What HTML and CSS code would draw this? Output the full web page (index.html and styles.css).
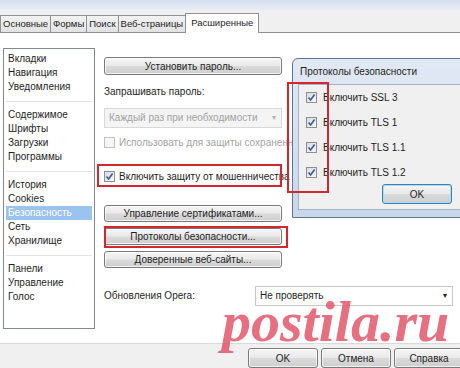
FILE: index.html
```html
<!DOCTYPE html>
<html lang="ru">

<head>
    <meta charset="UTF-8">
    <title>Настройки</title>
    <link rel="stylesheet" href="styles.css">
</head>

<body>
    <div class="glass"></div>

    <!-- Вкладки -->
    <div class="tabs">
        <div class="tab">Основные</div>
        <div class="tab">Формы</div>
        <div class="tab">Поиск</div>
        <div class="tab">Веб-страницы</div>
        <div class="tab active">Расширенные</div>
    </div>

    <div class="panel">
        <ul class="sections">
            <li>Вкладки</li>
            <li>Навигация</li>
            <li>Уведомления</li>
            <li class="sep"></li>
            <li>Содержимое</li>
            <li>Шрифты</li>
            <li>Загрузки</li>
            <li>Программы</li>
            <li class="sep"></li>
            <li>История</li>
            <li>Cookies</li>
            <li class="selected">Безопасность</li>
            <li>Сеть</li>
            <li>Хранилище</li>
            <li class="sep"></li>
            <li>Панели</li>
            <li>Управление</li>
            <li>Голос</li>
        </ul>

        <div class="settings">
            <button class="btn wide">Установить пароль...</button>
            <div class="label ask">Запрашивать пароль:</div>
            <div class="select disabled">Каждый раз при необходимости<span class="arrow">&#9662;</span></div>
            <label class="check-row disabled">
                <span class="box"></span>
                <span class="nowrap">Использовать для защиты сохраненных паролей</span>
            </label>
            <label class="check-row fraud">
                <span class="box"><svg width="9" height="9" viewBox="0 0 9 9"><path d="M1.5 4.5 L3.6 7 L7.6 1.5" fill="none" stroke="#3d5a96" stroke-width="1.6"/></svg></span>
                <span class="nowrap">Включить защиту от мошенничества и вредоносных программ</span>
            </label>
            <button class="btn wide certs">Управление сертификатами...</button>
            <button class="btn wide">Протоколы безопасности...</button>
            <button class="btn wide">Доверенные веб-сайты...</button>

            <div class="updates">
                <span class="label">Обновления Opera:</span>
                <div class="select">Не проверять<span class="arrow dark">&#9662;</span></div>
            </div>
        </div>
    </div>

    <div class="footer">
        <button class="btn">OK</button>
        <button class="btn">Отмена</button>
        <button class="btn">Справка</button>
    </div>

    <!-- Диалог "Протоколы безопасности" -->
    <div class="dialog">
        <div class="dialog-title">Протоколы безопасности</div>
        <div class="dialog-body">
            <label class="check-row proto">
                <span class="box"><svg width="9" height="9" viewBox="0 0 9 9"><path d="M1.5 4.5 L3.6 7 L7.6 1.5" fill="none" stroke="#3d5a96" stroke-width="1.6"/></svg></span>
                Включить SSL 3
            </label>
            <label class="check-row proto">
                <span class="box"><svg width="9" height="9" viewBox="0 0 9 9"><path d="M1.5 4.5 L3.6 7 L7.6 1.5" fill="none" stroke="#3d5a96" stroke-width="1.6"/></svg></span>
                Включить TLS 1
            </label>
            <label class="check-row proto">
                <span class="box"><svg width="9" height="9" viewBox="0 0 9 9"><path d="M1.5 4.5 L3.6 7 L7.6 1.5" fill="none" stroke="#3d5a96" stroke-width="1.6"/></svg></span>
                Включить TLS 1.1
            </label>
            <label class="check-row proto">
                <span class="box"><svg width="9" height="9" viewBox="0 0 9 9"><path d="M1.5 4.5 L3.6 7 L7.6 1.5" fill="none" stroke="#3d5a96" stroke-width="1.6"/></svg></span>
                Включить TLS 1.2
            </label>
            <div class="dialog-actions">
                <button class="btn default">OK</button>
            </div>
        </div>
    </div>

    <!-- Красные рамки -->
    <div class="mark mark-fraud"></div>
    <div class="mark mark-proto"></div>
    <div class="mark mark-dialog"></div>

    <div class="watermark">postila.ru</div>
</body>

</html>
```

FILE: styles.css
```css
/* Общий вид окна */
body {
    margin: 0;
    width: 460px;
    height: 368px;
    overflow: hidden;
    position: relative;
    background-color: #f0f0f0;
    font-family: "Liberation Sans", Arial, sans-serif;
    font-size: 10px;
    color: #1e1e1e;
}

.glass {
    height: 10px;
    background: linear-gradient(#d3dfee, #e9eef5);
}

/* Вкладки */
.tabs {
    height: 22px;
    display: flex;
    align-items: flex-end;
    font-size: 9.5px;
}

.tab {
    height: 16px;
    line-height: 16px;
    padding: 0 2px;
    border: 1px solid #8e9297;
    border-bottom: none;
    margin-right: -1px;
    background: linear-gradient(#f3f3f3, #e2e2e2);
    white-space: nowrap;
}

.tab.active {
    height: 19px;
    line-height: 18px;
    padding: 0 5px;
    background: #ffffff;
    position: relative;
    z-index: 1;
    margin-bottom: -1px;
}

/* Панель с настройками */
.panel {
    height: 310px;
    background: #ffffff;
    border-top: 1px solid #8e9297;
    display: flex;
    align-items: flex-start;
}

.sections {
    list-style: none;
    margin: 15px 0 0 3px;
    padding: 3px 2px;
    width: 86px;
    height: 273px;
    border: 1px solid #828790;
}

.sections li {
    height: 14px;
    line-height: 14px;
    padding-left: 2px;
    white-space: nowrap;
}

.sections li.sep {
    position: relative;
}

.sections li.sep::after {
    content: "";
    position: absolute;
    left: 0;
    right: 0;
    top: 7px;
    border-top: 1px solid #e2e2e2;
}

.sections li.selected {
    background: #9ac3ef;
    color: #ffffff;
}

.settings {
    margin-left: 9px;
    padding-top: 24px;
    width: 178px;
    display: flex;
    flex-direction: column;
}

.label {
    line-height: 14px;
    white-space: nowrap;
}

.label.ask {
    margin: 4px 0 9px;
}

.nowrap {
    white-space: nowrap;
}

/* Кнопки */
.btn {
    font-family: inherit;
    font-size: 10px;
    color: #1e1e1e;
    height: 18px;
    padding: 0;
    border: 1px solid #7a7a7a;
    border-radius: 3px;
    background: linear-gradient(#f6f6f6 0%, #e9e9e9 48%, #dadada 52%, #cfcfcf 100%);
    box-shadow: inset 0 0 0 1px rgba(255, 255, 255, 0.7);
}

.btn.wide {
    width: 178px;
    margin-bottom: 6px;
}

.btn.certs,
.btn.certs ~ .btn {
    height: 17px;
}

.btn.certs {
    margin-top: 19px;
}

/* Выпадающие списки */
.select {
    position: relative;
    height: 18px;
    line-height: 18px;
    padding: 0 4px;
    border: 1px solid #c9c9c9;
    background: #ffffff;
    white-space: nowrap;
}

.select.disabled {
    background: #f4f4f4;
    border-color: #d8d8d8;
    color: #a3a3a3;
}

.arrow {
    position: absolute;
    right: 5px;
    top: 0;
    font-size: 8px;
    color: #b3b3b3;
}

.arrow.dark {
    color: #222;
}

/* Флажки */
.check-row {
    display: flex;
    align-items: center;
    gap: 4px;
    height: 20px;
    white-space: nowrap;
}

.settings .check-row {
    width: 190px;
    overflow: hidden;
}

.check-row.disabled {
    color: #a3a3a3;
    margin-top: 4px;
}

.check-row.fraud {
    margin-top: 14px;
}

.box {
    flex: none;
    width: 9px;
    height: 9px;
    border: 1px solid #8f8f8f;
    background: linear-gradient(135deg, #d6dbe4, #f7f8fa);
    display: flex;
    align-items: center;
    justify-content: center;
}

.check-row.disabled .box {
    border-color: #c2c2c2;
    background: #f6f6f6;
}

/* Обновления Opera */
.updates {
    display: flex;
    align-items: center;
    margin-top: 12px;
    width: 349px;
}

.updates .label {
    width: 151px;
    flex: none;
}

.updates .select {
    flex: 1;
}

/* Нижняя панель */
.footer {
    height: 24px;
    border-top: 1px solid #d9d9d9;
    display: flex;
    gap: 3px;
    padding: 4px 0 0 248px;
}

.footer .btn {
    flex: none;
    width: 70px;
    height: 20px;
}

/* Диалог */
.dialog {
    position: absolute;
    left: 292px;
    top: 58px;
    width: 180px;
    height: 158px;
    border: 1px solid #5f7492;
    border-radius: 6px 6px 0 0;
    background: linear-gradient(#e1e9f4, #c8d7ea);
}

.dialog-title {
    height: 25px;
    line-height: 25px;
    padding-left: 7px;
    white-space: nowrap;
}

.dialog-body {
    margin-left: 5px;
    height: 124px;
    background: #f0f0f0;
    border: 1px solid #a3b3c8;
    border-right: none;
    padding-left: 7px;
}

.check-row.proto {
    height: 25px;
    gap: 6px;
}

.dialog-actions {
    display: flex;
    margin-top: -1px;
    padding-left: 76px;
}

.btn.default {
    width: 70px;
    height: 20px;
    border-color: #3c7fb1;
    box-shadow: inset 0 0 0 1px #a9dcf5;
}

/* Красные рамки поверх */
.mark {
    position: absolute;
    border: 2px solid #d3262e;
}

.mark-fraud {
    left: 97px;
    top: 164px;
    width: 181px;
    height: 19px;
}

.mark-proto {
    left: 104px;
    top: 226px;
    width: 180px;
    height: 18px;
}

.mark-dialog {
    left: 287px;
    top: 82px;
    width: 38px;
    height: 107px;
}

/* Водяной знак */
.watermark {
    position: absolute;
    left: 222px;
    top: 293px;
    font-family: "Liberation Serif", serif;
    font-weight: bold;
    font-style: italic;
    font-size: 58px;
    line-height: 1;
    color: #e2566b;
    opacity: 0.85;
}
```
